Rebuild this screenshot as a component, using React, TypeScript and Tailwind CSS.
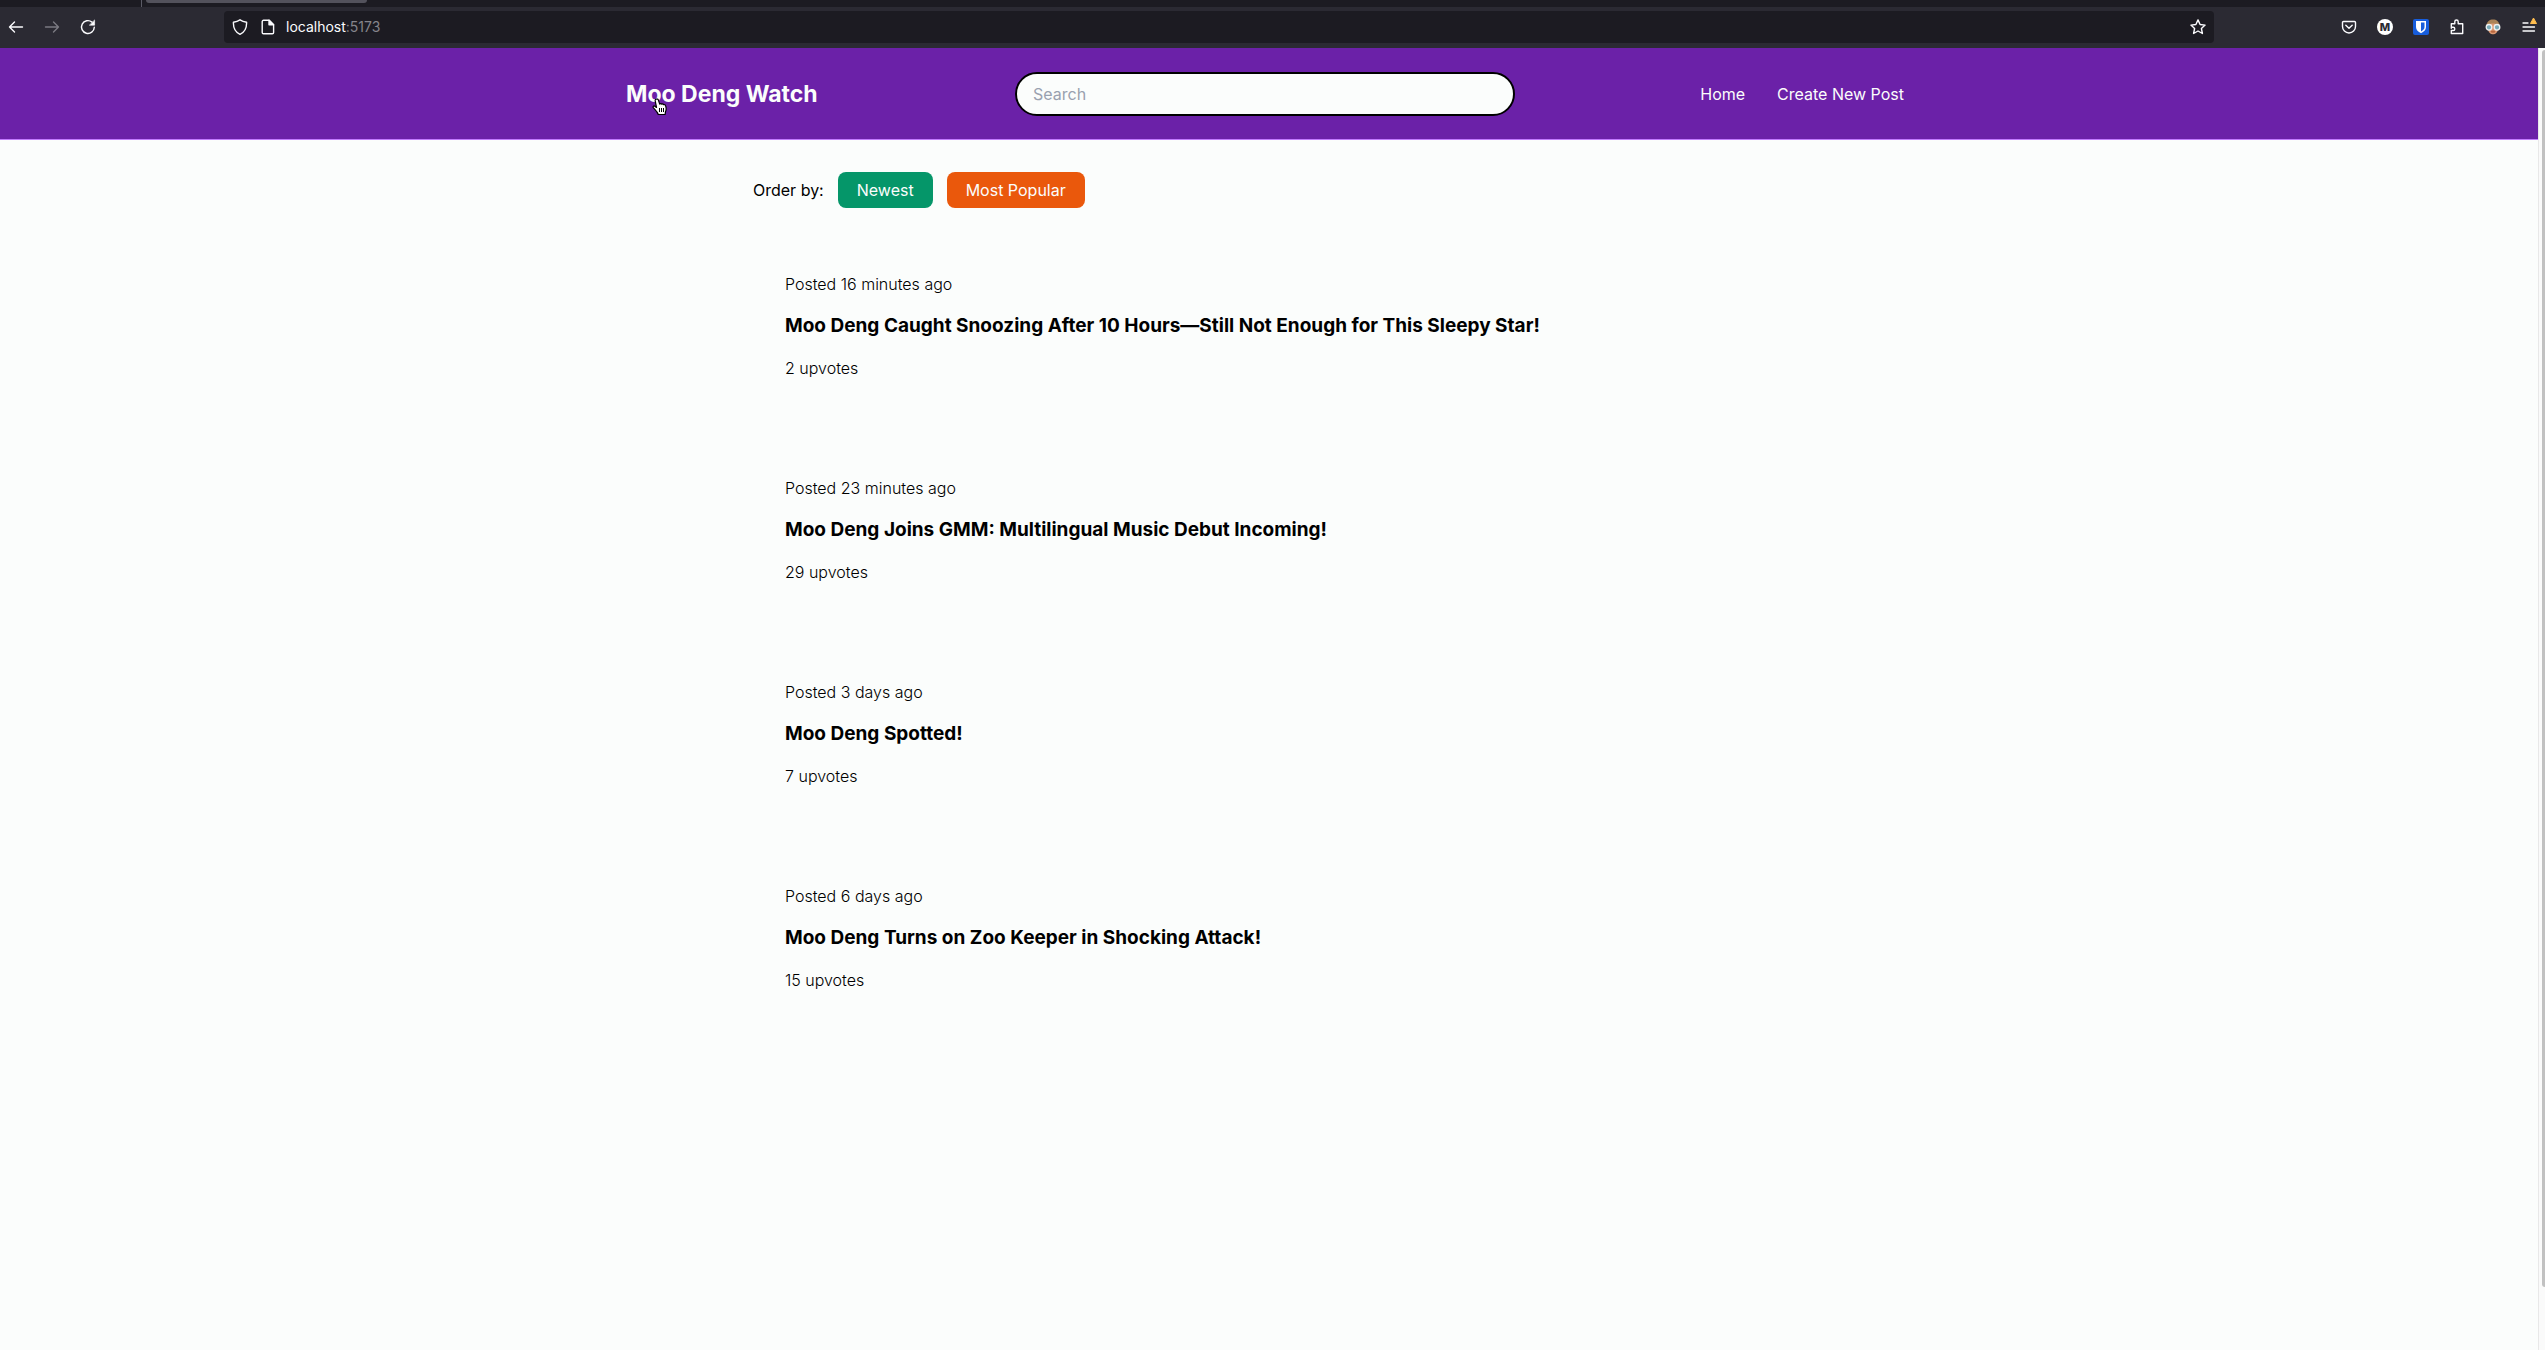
import React from "react";

const posts = [
  { age: "Posted 16 minutes ago", title: "Moo Deng Caught Snoozing After 10 Hours—Still Not Enough for This Sleepy Star!", votes: "2 upvotes" },
  { age: "Posted 23 minutes ago", title: "Moo Deng Joins GMM: Multilingual Music Debut Incoming!", votes: "29 upvotes" },
  { age: "Posted 3 days ago", title: "Moo Deng Spotted!", votes: "7 upvotes" },
  { age: "Posted 6 days ago", title: "Moo Deng Turns on Zoo Keeper in Shocking Attack!", votes: "15 upvotes" },
];

function ToolButton({ label, children }: { label: string; children: React.ReactNode }) {
  return (
    <button aria-label={label} className="flex h-8 w-9 shrink-0 items-center justify-center">
      {children}
    </button>
  );
}

function Icon({ children }: { children: React.ReactNode }) {
  return (
    <svg width="16" height="16" viewBox="0 0 16 16" fill="none" stroke="#fbfbfe" strokeWidth="1.4" strokeLinecap="round" strokeLinejoin="round" className="shrink-0">
      {children}
    </svg>
  );
}

function BrowserBar() {
  return (
    <div className="overflow-hidden bg-[#2b2a33] text-[#fbfbfe]">
      <div className="flex h-[7px] items-start bg-[#1c1b22]">
        <div className="h-full w-[141px] shrink-0" />
        <div className="mr-1 h-full w-px bg-[#5b5b66]" />
        <div className="h-[3px] w-[221px] rounded-b bg-[#53525c]" />
      </div>
      <div className="-mx-0.5 flex h-[41px] items-center pb-px">
        <ToolButton label="Back">
          <Icon><path d="M1.5 8h13M6.5 3L1.5 8l5 5" /></Icon>
        </ToolButton>
        <ToolButton label="Forward">
          <Icon><path d="M1.5 8h13M9.5 3l5 5-5 5" stroke="#7b7a82" /></Icon>
        </ToolButton>
        <ToolButton label="Reload">
          <Icon>
            <path d="M14.3 8.2A6.4 6.4 0 1 1 12 3.1" />
            <path d="M14.6 1.3v4.9H9.7z" fill="#fbfbfe" strokeWidth="0.6" />
          </Icon>
        </ToolButton>
        <div className="ml-[118px] mr-[117px] flex h-8 min-w-0 flex-1 items-center rounded bg-[#1c1b22]">
          <div className="ml-2 flex items-center gap-3">
            <Icon><path d="M8 .8C6.200 2 4 2.800 1.400 3.200 1.200 8.800 3 13 8 15.300 13 13 14.800 8.800 14.600 3.200 12 2.800 9.800 2 8 .8z" /></Icon>
            <Icon>
              <path d="M3.500 1.300h5.700L13.600 5.700v7.700a1.300 1.300 0 0 1-1.300 1.300H3.500a1.300 1.300 0 0 1-1.300-1.300V2.600a1.300 1.300 0 0 1 1.300-1.300z" />
              <path d="M9 1.300v4.500h4.600z" fill="#fbfbfe" />
            </Icon>
          </div>
          <span className="ml-[10px] flex-1 text-sm">
            localhost<span className="text-[#85848b]">:5173</span>
          </span>
          <button aria-label="Bookmark this page" className="flex size-8 items-center justify-center">
            <Icon><path d="M8 .9l2.100 4.600 5 .6-3.700 3.400 1 5L8 12l-4.400 2.500 1-5L.9 6.100l5-.6z" /></Icon>
          </button>
        </div>
        <ToolButton label="Save to Pocket">
          <Icon>
            <path d="M2.500 2.500h11a1 1 0 0 1 1 1v4a6.500 6.500 0 0 1-13 0v-4a1 1 0 0 1 1-1z" />
            <path d="M4.800 6.200L8 9.300l3.200-3.100" />
          </Icon>
        </ToolButton>
        <ToolButton label="M extension">
          <span className="flex size-4 items-center justify-center rounded-full bg-white text-[11px] font-extrabold leading-4 text-[#2b2a33]">M</span>
        </ToolButton>
        <ToolButton label="Password manager">
          <svg width="16" height="16" viewBox="0 0 16 16">
            <rect width="16" height="16" rx="2" fill="#175ddc" />
            <path d="M3 2h10v6c0 3-2.200 4.900-5 6.200C5.200 12.900 3 11 3 8z" fill="#fff" />
            <path d="M8 3.500h3.500V8c0 2-1.400 3.400-3.500 4.500z" fill="#175ddc" />
          </svg>
        </ToolButton>
        <ToolButton label="Extensions">
          <Icon><path d="M2.300 9.300V4.700h3.500V2.700a1.700 1.700 0 0 1 3.400 0v2h4.500v9.800H2.300v-3h1.900a1.600 1.600 0 0 0 0-3.200H2.300" /></Icon>
        </ToolButton>
        <ToolButton label="Profile extension">
          <svg width="16" height="16" viewBox="0 0 16 16">
            <path d="M1.500 6C2 2.500 4.500.5 8 .5s6 2 6.500 5.500L13 10H3z" fill="#aa8358" />
            <path d="M3 6c2-2 8-2 10 0v4c0 3-2.500 5.300-5 5.300S3 13 3 10z" fill="#dc9a73" />
            <path d="M5.500 12.300q2.500-1.500 5 0l-1 1.500h-3z" fill="#b9673f" />
            <circle cx="4" cy="8.300" r="2.800" fill="#78aab8" stroke="#eef1f3" strokeWidth="1.300" />
            <circle cx="12" cy="8.300" r="2.800" fill="#78aab8" stroke="#eef1f3" strokeWidth="1.300" />
          </svg>
        </ToolButton>
        <ToolButton label="Open menu">
          <svg width="16" height="20" viewBox="0 0 16 20" fill="none">
            <path d="M2 6h5M2 10h11.500M2 14h11.500" stroke="#fbfbfe" strokeWidth="1.300" strokeLinecap="round" />
            <path d="M12.500 1l3 5.500h-6z" fill="#ffbd4f" stroke="#ffbd4f" strokeLinejoin="round" />
          </svg>
        </ToolButton>
      </div>
    </div>
  );
}

function HandCursor() {
  return (
    <svg width="16" height="18" viewBox="0 0 16 18" className="pointer-events-none absolute left-[26px] top-5">
      <path d="M4.200 1.200c1-.5 1.900 0 2.200.9l1.300 4c.6-.6 1.500-.6 2 .1.700-.4 1.500-.2 1.900.5.800-.3 1.700 0 2 1 .7 2 .9 4-.1 6l-.4 2.800H6.300C5.500 14 3.700 12.300 1.300 9.700c-.7-1 .3-2.200 1.500-1.500l1.700 1.200-1.300-6.500c-.1-.8.300-1.500 1-1.700z" fill="#fff" stroke="#000" strokeWidth="1.200" strokeLinejoin="round" />
      <path d="M7.500 10v4M9.500 10v4M11.500 10v4" stroke="#000" strokeWidth="1" />
    </svg>
  );
}

export default function App() {
  return (
    <div className="flex min-h-screen flex-col bg-[#fbfdfc] font-[Inter,sans-serif] text-base text-black">
      <BrowserBar />
      <div className="flex flex-1">
        <div className="min-w-0 flex-1">
          <header className="border-b border-purple-400 bg-[#6b21a8] pb-[23px] pt-6 text-[#fbfdfc]">
            <div className="mx-auto grid max-w-[1286px] grid-cols-[1fr_auto_1fr] items-center pr-2">
              <a href="#" className="relative justify-self-start text-[23px] font-bold leading-8">
                Moo Deng Watch
                <HandCursor />
              </a>
              <input
                type="text"
                aria-label="Search"
                placeholder="Search"
                className="h-11 w-[500px] rounded-full border-2 border-black bg-[#fbfdfc] px-4 text-black placeholder:text-gray-400"
              />
              <nav className="flex gap-8 justify-self-end">
                <a href="#">Home</a>
                <a href="#">Create New Post</a>
              </nav>
            </div>
          </header>
          <main className="mx-auto flex max-w-[1032px] flex-col gap-8 py-8">
            <div className="flex items-center gap-[14px]">
              <span>Order by:</span>
              <button className="h-9 rounded-lg bg-[#059669] px-[19px] text-[#fbfdfc]">Newest</button>
              <button className="h-9 rounded-lg bg-[#ea580c] px-[19px] text-[#fbfdfc]">Most Popular</button>
            </div>
            {posts.map((post) => (
              <article key={post.title} className="flex flex-col gap-4 p-8">
                <p className="font-light">{post.age}</p>
                <h2 className="text-[19px] font-bold leading-7">{post.title}</h2>
                <p className="font-light">{post.votes}</p>
              </article>
            ))}
          </main>
        </div>
        <div className="flex w-[7px] shrink-0 justify-end border-l border-[#e8e8e8] bg-[#fafafa]">
          <div className="mt-0.5 h-[95%] w-[3px] rounded-l bg-[#c1c1c1]" />
        </div>
      </div>
    </div>
  );
}
